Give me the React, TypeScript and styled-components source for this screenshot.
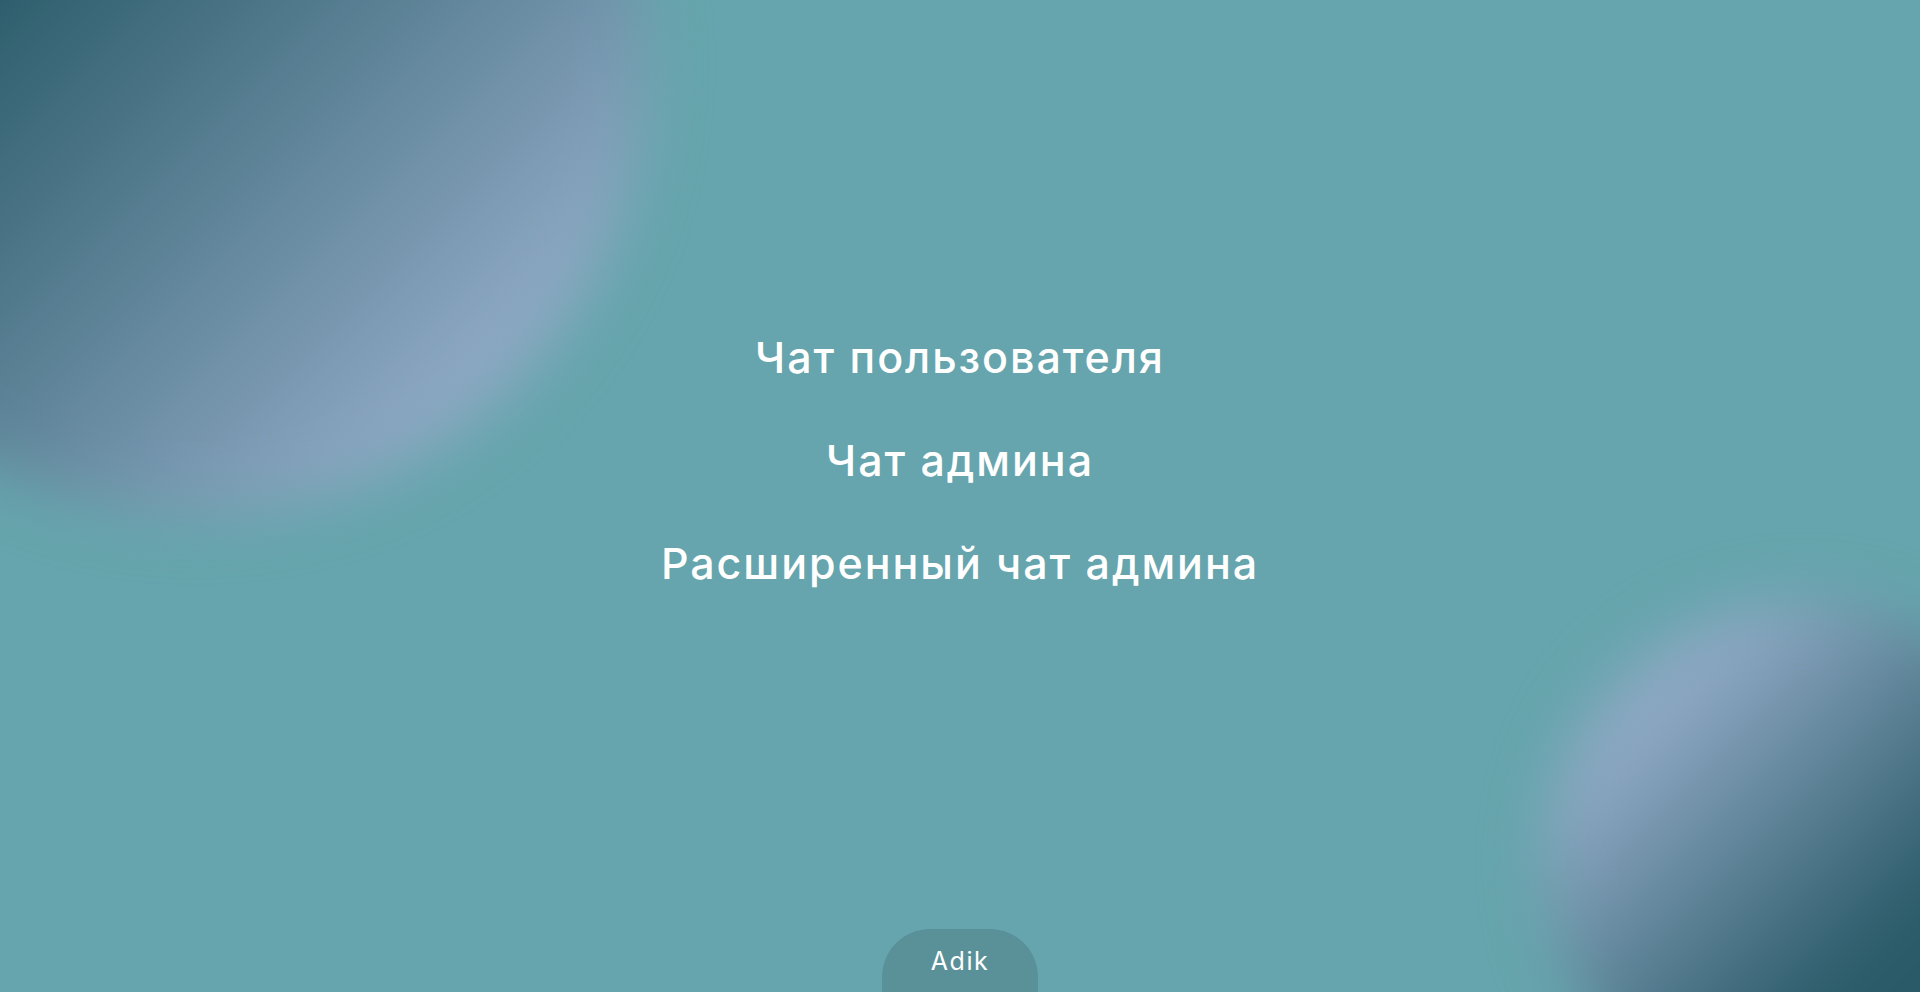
import React from "react";
import styled, { createGlobalStyle } from "styled-components";

const GlobalStyle = createGlobalStyle`
  html, body {
    margin: 0;
    padding: 0;
    height: 100%;
    overflow: hidden;
  }
  body {
    background: #66a5ad;
    font-family: Inter, "Noto Sans", "DejaVu Sans", sans-serif;
    color: #ffffff;
  }
  #root {
    height: 100%;
  }
`;

const Page = styled.div`
  position: relative;
  height: 100vh;
  overflow: hidden;
  background: #66a5ad;
  display: flex;
  flex-direction: column;
`;

const Blob = styled.div<{ $size: number; $left: number; $top: number; $gradient: string }>`
  position: absolute;
  left: ${(p) => p.$left}px;
  top: ${(p) => p.$top}px;
  width: ${(p) => p.$size}px;
  height: ${(p) => p.$size}px;
  border-radius: 50%;
  background: ${(p) => p.$gradient};
  filter: blur(30px);
  z-index: 0;
  pointer-events: none;
`;

const Main = styled.main`
  position: relative;
  z-index: 1;
  flex: 1;
  display: flex;
  flex-direction: column;
  align-items: center;
  justify-content: center;
  gap: 55px;
  padding-bottom: 9px;
`;

const NavLink = styled.a`
  font-size: 43px;
  line-height: 48px;
  font-weight: 500;
  letter-spacing: 0.045em;
  color: #ffffff;
  text-decoration: none;
  cursor: pointer;
`;

const Footer = styled.footer`
  position: relative;
  z-index: 1;
  display: flex;
  justify-content: center;
  height: 63px;
`;

const UserButton = styled.button`
  width: 156px;
  height: 63px;
  border: none;
  border-radius: 48px 48px 0 0;
  background: #5a9198;
  color: #ffffff;
  font-family: Inter, "Noto Sans", sans-serif;
  font-size: 25px;
  font-weight: 400;
  letter-spacing: 0.06em;
  padding: 0;
  cursor: pointer;
`;

export default function App() {
  return (
    <>
      <GlobalStyle />
      <Page>
        <Blob
          $size={900}
          $left={-255}
          $top={-385}
          $gradient="linear-gradient(135deg, #2b5c6a 34%, #8fa9c4 83%)"
        />
        <Blob
          $size={520}
          $left={1545}
          $top={602}
          $gradient="linear-gradient(135deg, #8ea8c3 22%, #2a5a68 66%)"
        />
        <Main>
          <NavLink>Чат пользователя</NavLink>
          <NavLink>Чат админа</NavLink>
          <NavLink>Расширенный чат админа</NavLink>
        </Main>
        <Footer>
          <UserButton>Adik</UserButton>
        </Footer>
      </Page>
    </>
  );
}
